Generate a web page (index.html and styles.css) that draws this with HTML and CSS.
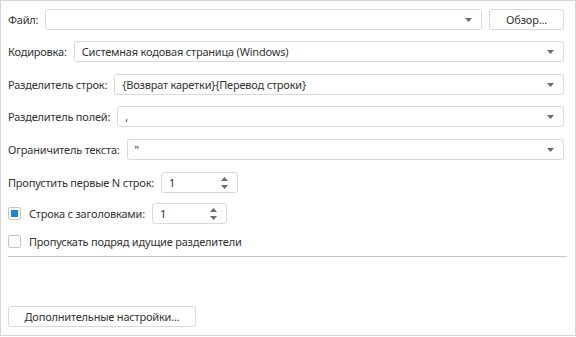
FILE: index.html
```html
<!DOCTYPE html>
<html lang="ru">
<head>
<meta charset="utf-8">
<link rel="stylesheet" href="styles.css">
</head>
<body>
<div class="panel">
  <div class="form">
    <div class="row">
      <span class="label">Файл:</span>
      <div class="combo grow"><span class="value"></span><svg class="arrow" width="7" height="4" viewBox="0 0 7 4"><path d="M0 0H7L3.5 4Z" fill="#6b6b6b"/></svg></div>
      <button class="btn browse">Обзор...</button>
    </div>
    <div class="row">
      <span class="label">Кодировка:</span>
      <div class="combo grow"><span class="value">Системная кодовая страница (Windows)</span><svg class="arrow" width="7" height="4" viewBox="0 0 7 4"><path d="M0 0H7L3.5 4Z" fill="#6b6b6b"/></svg></div>
    </div>
    <div class="row step">
      <span class="label">Разделитель строк:</span>
      <div class="combo grow"><span class="value">{Возврат каретки}{Перевод строки}</span><svg class="arrow" width="7" height="4" viewBox="0 0 7 4"><path d="M0 0H7L3.5 4Z" fill="#6b6b6b"/></svg></div>
    </div>
    <div class="row">
      <span class="label">Разделитель полей:</span>
      <div class="combo grow"><span class="value">,</span><svg class="arrow" width="7" height="4" viewBox="0 0 7 4"><path d="M0 0H7L3.5 4Z" fill="#6b6b6b"/></svg></div>
    </div>
    <div class="row step">
      <span class="label">Ограничитель текста:</span>
      <div class="combo grow"><span class="value">"</span><svg class="arrow" width="7" height="4" viewBox="0 0 7 4"><path d="M0 0H7L3.5 4Z" fill="#6b6b6b"/></svg></div>
    </div>
    <div class="row step">
      <span class="label">Пропустить первые N строк:</span>
      <div class="spin"><span class="value">1</span><span class="spin-btns"><svg width="7" height="4" viewBox="0 0 7 4"><path d="M0 4H7L3.5 0Z" fill="#6b6b6b"/></svg><svg width="7" height="4" viewBox="0 0 7 4"><path d="M0 0H7L3.5 4Z" fill="#6b6b6b"/></svg></span></div>
    </div>
    <div class="row tight">
      <span class="check checked"><span class="mark"></span></span>
      <span class="label check-label">Строка с заголовками:</span>
      <div class="spin spin2"><span class="value">1</span><span class="spin-btns"><svg width="7" height="4" viewBox="0 0 7 4"><path d="M0 4H7L3.5 0Z" fill="#6b6b6b"/></svg><svg width="7" height="4" viewBox="0 0 7 4"><path d="M0 0H7L3.5 4Z" fill="#6b6b6b"/></svg></span></div>
    </div>
    <div class="row last">
      <span class="check"></span>
      <span class="label check-label">Пропускать подряд идущие разделители</span>
    </div>
  </div>
  <div class="separator"></div>
  <div class="footer">
    <button class="btn more">Дополнительные настройки...</button>
  </div>
</div>
</body>
</html>
```
FILE: styles.css
```css
html, body {
  margin: 0;
  padding: 0;
  background: #ffffff;
}
body {
  font-family: "Noto Sans", "Open Sans", sans-serif;
  font-size: 11px;
  letter-spacing: -0.2px;
  color: #333333;
}
.panel {
  box-sizing: border-box;
  width: 576px;
  height: 336px;
  border: 1px solid #d6d6d6;
  display: flex;
  flex-direction: column;
  padding: 8px 11px 8px 7px;
}
.form {
  display: flex;
  flex-direction: column;
  gap: 11px;
}
.row {
  display: flex;
  align-items: center;
  height: 21px;
  gap: 7px;
}
.row.step {
  margin-top: 1px;
}
.row.tight {
  margin-top: -1px;
}
.row.last {
  margin-top: -4px;
}
.label {
  white-space: nowrap;
  line-height: 14px;
}
.combo, .spin, .btn {
  box-sizing: border-box;
  height: 21px;
  border: 1px solid #dadada;
  border-radius: 3px;
  background: #ffffff;
}
.combo {
  display: flex;
  align-items: center;
  padding: 0 9px 0 7px;
}
.grow {
  flex: 1;
}
.value {
  flex: 1;
  white-space: nowrap;
}
.arrow {
  flex: none;
}
.btn {
  font-family: inherit;
  font-size: 11px;
  letter-spacing: -0.2px;
  color: #333333;
  padding: 0;
  cursor: default;
}
.browse {
  width: 75px;
}
.spin {
  display: flex;
  align-items: center;
  width: 77px;
  padding: 0 9px 0 7px;
}
.spin2 {
  width: 75px;
}
.spin-btns {
  display: flex;
  flex-direction: column;
  gap: 4px;
}
.check {
  box-sizing: border-box;
  width: 13px;
  height: 13px;
  border: 1px solid #c4c4c4;
  border-radius: 2px;
  background: #ffffff;
  display: flex;
  align-items: center;
  justify-content: center;
  flex: none;
}
.mark {
  width: 7px;
  height: 7px;
  background: #1f87d2;
}
.check-label {
  margin-left: 1px;
}
.separator {
  height: 1px;
  background: #c9c9c9;
  margin: 4px -3px 0 0;
}
.footer {
  margin-top: auto;
  display: flex;
}
.more {
  width: 188px;
}
```
